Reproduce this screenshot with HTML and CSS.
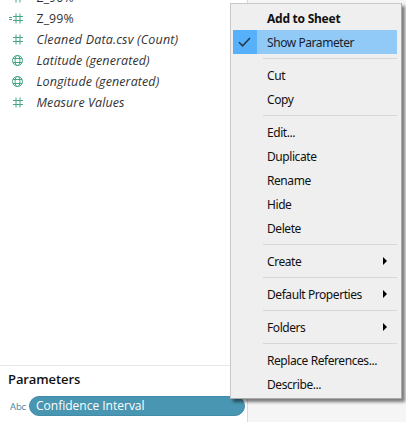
FILE: index.html
```
<!DOCTYPE html>
<html lang="en">
<head>
<meta charset="utf-8">
<title>Data pane</title>
<link rel="stylesheet" href="styles.css">
</head>
<body>
<svg class="defs" aria-hidden="true">
  <symbol id="hash" viewBox="0 0 11 11"><path d="M4 .5v10M8 .5v10M1 3.5h10M1 7.5h10"/></symbol>
  <symbol id="globe" viewBox="0 0 11 11"><circle cx="5.5" cy="5.5" r="5"/><ellipse cx="5.5" cy="5.5" rx="2.4" ry="5"/><path d="M1 3.5h9M1 7.5h9"/></symbol>
</svg>
<div class="app">
  <aside class="pane">
    <ul class="fields">
      <li class="field"><svg class="icon"><use href="#hash"/></svg><span class="calc">Z_90%</span></li>
      <li class="field"><svg class="icon"><use href="#hash"/></svg><svg class="equals" viewBox="0 0 3 5"><path d="M0 1.5h3M0 3.5h3"/></svg><span class="calc">Z_99%</span></li>
      <li class="field"><svg class="icon"><use href="#hash"/></svg><em class="f-count">Cleaned Data.csv (Count)</em></li>
      <li class="field"><svg class="icon"><use href="#globe"/></svg><em>Latitude (generated)</em></li>
      <li class="field"><svg class="icon"><use href="#globe"/></svg><em>Longitude (generated)</em></li>
      <li class="field"><svg class="icon"><use href="#hash"/></svg><em>Measure Values</em></li>
    </ul>
    <section class="parameters">
      <h2>Parameters</h2>
      <div class="parameter"><span class="type">Abc</span><span class="pill">Confidence Interval</span></div>
    </section>
  </aside>
  <main class="canvas"></main>
</div>
<nav class="menu">
  <div class="item strong"><span>Add to Sheet</span></div>
  <div class="item active"><i class="check"><svg viewBox="0 0 24 24"><path d="M6 12.2l3.6 3.6 7.4-7.8"/></svg></i><span>Show Parameter</span></div>
  <hr>
  <div class="item"><span>Cut</span></div>
  <div class="item"><span>Copy</span></div>
  <hr>
  <div class="item"><span>Edit...</span></div>
  <div class="item"><span>Duplicate</span></div>
  <div class="item"><span>Rename</span></div>
  <div class="item"><span>Hide</span></div>
  <div class="item"><span>Delete</span></div>
  <hr>
  <div class="item sub"><span>Create</span></div>
  <hr>
  <div class="item sub"><span>Default Properties</span></div>
  <hr>
  <div class="item sub"><span>Folders</span></div>
  <hr>
  <div class="item"><span>Replace References...</span></div>
  <div class="item"><span>Describe...</span></div>
</nav>
</body>
</html>
```
FILE: styles.css
```
* { box-sizing: border-box; }
body { margin: 0; width: 406px; height: 422px; overflow: hidden; position: relative; background: #fff; font-family: "Open Sans", sans-serif; font-size: 12px; color: #333; }
.defs { position: absolute; width: 0; height: 0; }
.app { display: flex; height: 422px; }
.pane { width: 248px; display: flex; flex-direction: column; border-right: 1px solid #d9d9d9; }
.canvas { flex: 1; background: #f5f5f5; }
.fields { list-style: none; margin: -13px 0 0; padding: 0; flex: 1; font-size: 12.5px; letter-spacing: .1px; }
.field { position: relative; display: flex; align-items: center; height: 21px; padding-left: 12px; white-space: nowrap; }
.icon { width: 11px; height: 11px; margin-right: 13.5px; fill: none; stroke: #45a681; stroke-width: 1; overflow: visible; }
.equals { position: absolute; left: 9px; top: 8px; width: 3px; height: 5px; stroke: #45a681; stroke-width: 1; }
.calc { font-size: 12.3px; }
.f-count { letter-spacing: .18px; }
.parameters { height: 57px; border-top: 1px solid #e6e6e6; }
h2 { margin: 0; padding: 3px 8px 0; height: 30px; font: 600 13px/20px "Open Sans", sans-serif; letter-spacing: -.1px; color: #111; }
.parameter { display: flex; align-items: center; height: 20px; padding-left: 10px; }
.type { width: 19px; font-size: 9.5px; letter-spacing: -.1px; color: #3d87a2; }
.pill { width: 216px; height: 20px; padding-left: 6px; border: 1px solid #428ca9; border-radius: 10px; background: #4996b2; color: #fff; font-weight: 500; line-height: 18px; white-space: nowrap; }
.menu { position: absolute; left: 230px; top: 3px; width: 172px; height: 396px; padding: 2px; border: 1px solid #c9c9c9; border-right-color: #aaa; border-bottom-color: #aaa; background: #efefef; box-shadow: 3px 3px 3px rgba(0,0,0,.5); color: #111; font-family: "Noto Sans", sans-serif; font-size: 12px; letter-spacing: -.43px; }
.item { position: relative; display: flex; align-items: center; width: 164px; height: 24px; padding-left: 34px; white-space: nowrap; }
.strong { font-weight: 700; letter-spacing: -.25px; }
.active { background: #91c9f7; color: #18232d; }
.check { position: absolute; left: 0; top: 0; width: 24px; height: 24px; background: #56b0fa; }
.check svg { display: block; fill: none; stroke: #26394b; stroke-width: 1.6; }
.sub::after { content: ""; position: absolute; right: 10px; top: 8px; border-left: 4px solid #000; border-top: 4px solid transparent; border-bottom: 4px solid transparent; }
hr { width: 134px; height: 1px; margin: 4px 0 4px 30px; border: 0; background: #d7d7d7; }
```
